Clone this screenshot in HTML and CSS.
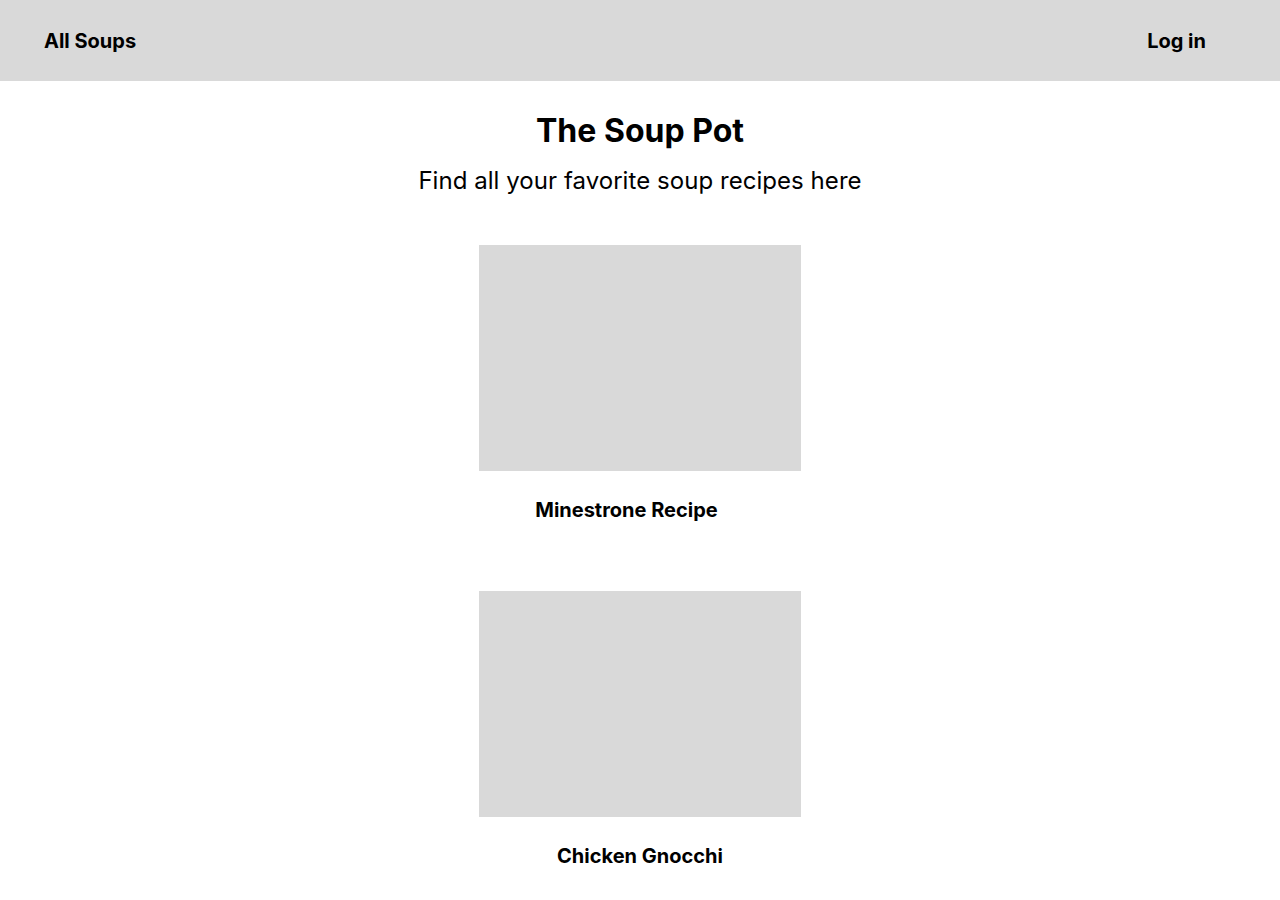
FILE: index.html
```html
<!DOCTYPE html>
<html lang="en">
<head>
<meta charset="utf-8">
<title>The Soup Pot</title>
<link rel="stylesheet" href="styles.css">
</head>
<body>
<header class="topbar">
  <a class="nav-link" href="#">All Soups</a>
  <a class="nav-link login" href="#">Log in</a>
</header>
<main class="page">
  <section class="hero">
    <h1 class="title">The Soup Pot</h1>
    <p class="subtitle">Find all your favorite soup recipes here</p>
  </section>
  <section class="cards">
    <article class="card">
      <div class="card-image"></div>
      <h2 class="card-title card-title-offset">Minestrone Recipe</h2>
    </article>
    <article class="card">
      <div class="card-image"></div>
      <h2 class="card-title">Chicken Gnocchi</h2>
    </article>
  </section>
</main>
</body>
</html>
```

FILE: styles.css
```css
* { box-sizing: border-box; }
html, body {
  margin: 0;
  padding: 0;
  background: #ffffff;
  color: #000000;
  font-family: Inter, "Liberation Sans", sans-serif;
}
.topbar {
  height: 81px;
  background: #d9d9d9;
  display: flex;
  align-items: center;
  justify-content: space-between;
  padding: 0 74px 0 44px;
}
.nav-link {
  font-size: 20px;
  line-height: 24px;
  font-weight: 700;
  color: #000;
  text-decoration: none;
}
.page {
  display: flex;
  flex-direction: column;
  align-items: center;
}
.hero {
  margin-top: 30px;
  text-align: center;
}
.title {
  margin: 0;
  font-size: 32px;
  font-weight: 700;
  line-height: 39px;
}
.subtitle {
  margin: 16px 0 0;
  font-size: 24px;
  font-weight: 400;
  line-height: 29px;
  letter-spacing: 0.05px;
}
.cards {
  margin-top: 50px;
  display: flex;
  flex-direction: column;
  align-items: center;
  gap: 69px;
}
.card {
  display: flex;
  flex-direction: column;
  align-items: center;
}
.card-image {
  width: 322px;
  height: 226px;
  background: #d9d9d9;
}
.card-title {
  margin: 27px 0 0;
  font-size: 20px;
  font-weight: 700;
  line-height: 24px;
}
.card-title-offset {
  padding-right: 27px;
}
```
